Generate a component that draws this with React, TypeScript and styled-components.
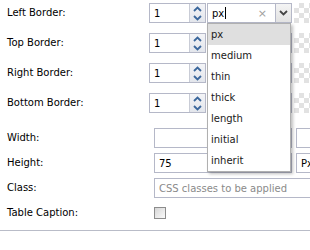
import React, { FC } from "react"
import styled, { createGlobalStyle } from "styled-components"

const GlobalStyle = createGlobalStyle`
    html, body {
        margin: 0;
        padding: 0;
        background: #fff;
    }
    body {
        font-family: "DejaVu Sans", Verdana, sans-serif;
        font-size: 10px;
        color: #000;
        overflow: hidden;
    }
`

const Page = styled.div`
    width: 310px;
    height: 250px;
    overflow: hidden;
    display: flex;
    flex-direction: column;
`

const Section = styled.div<{ $top: number; $label: number; $gap: number }>`
    display: grid;
    grid-template-columns: ${(p) => p.$label}px 1fr;
    row-gap: ${(p) => p.$gap}px;
    padding: ${(p) => p.$top}px 0 0 7px;
    align-items: center;
`

const Label = styled.div`
    height: 20px;
    line-height: 20px;
    white-space: nowrap;
`

const Fields = styled.div`
    display: flex;
    align-items: center;
    height: 20px;
    min-width: 0;
`

const Box = styled.div<{ $w?: number; $ml?: number }>`
    box-sizing: border-box;
    height: 20px;
    border: 1px solid #b5b8c8;
    background: #fff;
    width: ${(p) => (p.$w ? `${p.$w}px` : "auto")};
    margin-left: ${(p) => p.$ml ?? 0}px;
    display: flex;
    align-items: center;
    flex-shrink: 0;
    position: relative;
`

const Value = styled.span<{ $muted?: boolean }>`
    flex: 1;
    padding-left: 4px;
    color: ${(p) => (p.$muted ? "#8a8a8a" : "#000")};
    white-space: nowrap;
    overflow: hidden;
`

const Spinner = styled.div`
    width: 15px;
    height: 18px;
    border-left: 1px solid #c9ccd6;
    background: linear-gradient(#f3f4f7, #e3e6ec);
    display: flex;
    flex-direction: column;
    align-items: center;
    justify-content: space-around;
`

const Trigger = styled.div`
    box-sizing: border-box;
    width: 16px;
    height: 20px;
    border: 1px solid #b5b8c8;
    border-left: none;
    background: linear-gradient(#f4f4f4, #e2e2e2);
    display: flex;
    align-items: center;
    justify-content: center;
    flex-shrink: 0;
`

const Clear = styled.span`
    color: #a0a0a0;
    font-size: 11px;
    margin-right: 8px;
`

const Caret = styled.span`
    display: inline-block;
    width: 1px;
    height: 12px;
    background: #000;
    vertical-align: -2px;
    margin-left: 1px;
`

const Swatch = styled.div`
    box-sizing: border-box;
    height: 20px;
    width: 30px;
    margin-left: 2px;
    flex-shrink: 0;
    background: repeating-conic-gradient(#e2e2e2 0 25%, #fff 0 50%) 0 0 / 10px 10px;
`

const ComboWrap = styled.div`
    position: relative;
    display: flex;
    margin-left: 1px;
`

const List = styled.ul`
    position: absolute;
    top: 20px;
    left: 0;
    width: 84px;
    margin: 0;
    padding: 0;
    list-style: none;
    background: #fff;
    border: 1px solid #b0b0b0;
    box-shadow: 2px 2px 3px rgba(0, 0, 0, 0.25);
    z-index: 10;
    box-sizing: border-box;
`

const Item = styled.li<{ $active?: boolean }>`
    height: 21px;
    line-height: 21px;
    padding-left: 3px;
    color: #1a1a1a;
    background: ${(p) => (p.$active ? "#dfdfdf" : "transparent")};
`

const Check = styled.div`
    box-sizing: border-box;
    width: 12px;
    height: 12px;
    border: 1px solid #8c8c8c;
    background: linear-gradient(135deg, #d6d6d6, #fafafa);
`

const Divider = styled.div`
    margin-top: 7px;
    height: 1px;
    background: #b9bcc8;
`

const Chevron: FC<{ up?: boolean; color?: string }> = ({ up, color = "#3b679c" }) => (
    <svg width="9" height="6" viewBox="0 0 9 6">
        <path
            d={up ? "M1 5 L4.5 1.5 L8 5" : "M1 1 L4.5 4.5 L8 1"}
            fill="none"
            stroke={color}
            strokeWidth="1.8"
        />
    </svg>
)

const NumberField: FC<{ value: string; width: number }> = ({ value, width }) => (
    <Box $w={width}>
        <Value>{value}</Value>
        <Spinner>
            <Chevron up />
            <Chevron />
        </Spinner>
    </Box>
)

const units = ["px", "medium", "thin", "thick", "length", "initial", "inherit"]

const borders = ["Left Border:", "Top Border:", "Right Border:", "Bottom Border:"]

const App: FC = () => (
    <Page>
        <GlobalStyle />
        <Section $top={3} $label={142} $gap={10}>
            {borders.map((label, i) => (
                <React.Fragment key={label}>
                    <Label>{label}</Label>
                    <Fields>
                        <NumberField value="1" width={57} />
                        {i === 0 ? (
                            <ComboWrap>
                                <Box $w={69}>
                                    <Value>
                                        px
                                        <Caret />
                                    </Value>
                                    <Clear>×</Clear>
                                </Box>
                                <Trigger>
                                    <Chevron color="#444" />
                                </Trigger>
                                <List>
                                    {units.map((u, j) => (
                                        <Item key={u} $active={j === 0}>{u}</Item>
                                    ))}
                                </List>
                            </ComboWrap>
                        ) : (
                            <ComboWrap>
                                <Box $w={69} />
                                <Trigger>
                                    <Chevron color="#444" />
                                </Trigger>
                            </ComboWrap>
                        )}
                        <Swatch />
                    </Fields>
                </React.Fragment>
            ))}
        </Section>
        <Section $top={15} $label={147} $gap={5}>
            <Label>Width:</Label>
            <Fields>
                <Box $w={138} />
                <Box $w={30} $ml={4} />
            </Fields>
            <Label>Height:</Label>
            <Fields>
                <NumberField value="75" width={138} />
                <Box $w={30} $ml={4}>
                    <Value>Px</Value>
                </Box>
            </Fields>
            <Label>Class:</Label>
            <Fields>
                <Box $w={170}>
                    <Value $muted>CSS classes to be applied</Value>
                </Box>
            </Fields>
            <Label>Table Caption:</Label>
            <Fields>
                <Check />
            </Fields>
        </Section>
        <Divider />
    </Page>
)

export default App
